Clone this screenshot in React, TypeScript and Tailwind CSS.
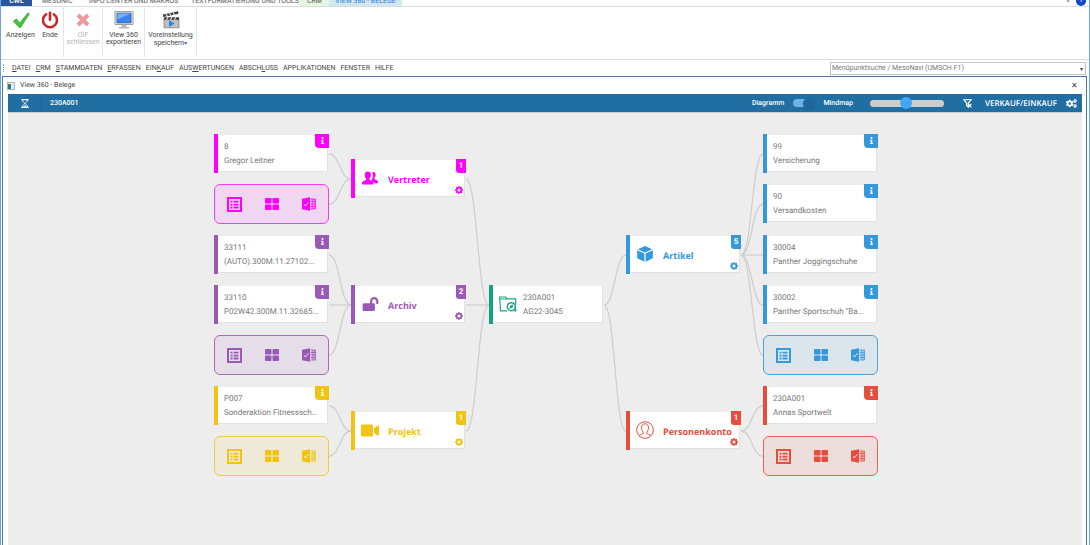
import type { ReactNode } from "react";
import { FaCogs, FaInfo, FaLockOpen, FaVideo } from "react-icons/fa";

interface Theme {
  text: string;
  bar: string;
  panel: string;
}

interface Leaf {
  id?: string;
  label?: string;
  y: number;
}

interface Group {
  name: string;
  count: number;
  theme: Theme;
  side: "left" | "right";
  y: number;
  icon: ReactNode;
  leaves: Leaf[];
}

const NODE_W = 115;
const NODE_MID = 20;
const COLUMNS = { leftLeaf: 0, leftGroup: 137, center: 275, rightGroup: 412, rightLeaf: 549 };
const CENTER_Y = 173;

const magenta: Theme = { text: "text-[#ff00ff]", bar: "bg-[#ff00ff]", panel: "border-[#f63df6] bg-[#f0d6f0]" };
const purple: Theme = { text: "text-[#9b59b6]", bar: "bg-[#9b59b6]", panel: "border-[#a56cbd] bg-[#e5dee8]" };
const yellow: Theme = { text: "text-[#f1c40f]", bar: "bg-[#f1c40f]", panel: "border-[#f1c93a] bg-[#efe9d8]" };
const blue: Theme = { text: "text-[#3498db]", bar: "bg-[#3498db]", panel: "border-[#4ba3de] bg-[#dbe5ec]" };
const red: Theme = { text: "text-[#e74c3c]", bar: "bg-[#e74c3c]", panel: "border-[#e86355] bg-[#eddddb]" };

function PeopleIcon() {
  return (
    <svg className="w-4 h-4" viewBox="0 0 16 16" fill="currentColor">
      <path d="M10.2 2.2c2-.6 3.500.5 3.400 2.600 0 1.300-.5 2.400-1.200 3v1.200c.3.8 3.400 1.200 3.600 2.700v1.500h-4c-.2-1.500-1.800-2-2.700-2.500l.2-1c.9-1 1.500-2.400 1.400-4.100 0-1.400-.3-2.500-.7-3.400z" />
      <path d="M5.800 1.500c2 0 3.200 1.400 3.100 3.500-.1 1.500-.6 2.700-1.400 3.400v1.400c.4.9 3.700 1.300 3.900 3.100v1.600H0v-1.600c.2-1.800 3.700-2.200 4.100-3.100V8.400C3.300 7.700 2.800 6.500 2.700 5c-.1-2.100 1.100-3.500 3.100-3.500z" />
    </svg>
  );
}

function CubeIcon() {
  return (
    <svg className="w-4 h-4" viewBox="0 0 16 16" fill="currentColor">
      <path d="M8 0l7.200 3.200L8 6.600.8 3.200z" />
      <path d="M.2 4.300l7.200 3.300v8.200L.2 12.300z" />
      <path d="M15.800 4.300L8.600 7.600v8.200l7.200-3.500z" />
    </svg>
  );
}

function PersonIcon() {
  return (
    <svg className="w-[18px] h-[18px]" viewBox="0 0 18 18" fill="none" stroke="currentColor" strokeWidth="1">
      <circle cx="9" cy="9" r="8.300" />
      <path d="M3.300 14.700c.4-1.300 3.800-1.300 4-2.500.1-.8-.3-1-.8-1.900C5.900 9.300 5.500 8 5.500 6.600 5.500 4.200 6.900 2.800 9 2.800s3.500 1.400 3.500 3.800c0 1.400-.4 2.700-1 3.700-.5.900-.9 1.100-.8 1.900.2 1.200 3.600 1.200 4 2.500" />
    </svg>
  );
}

function FolderIcon() {
  return (
    <svg className="w-[18px] h-4 text-[#1fa587]" viewBox="0 0 18 16" fill="none" stroke="currentColor" strokeWidth="1.200">
      <path d="M8 14.800H1.500L.7 1h6l1.200 1.800h8.800v6M.8 3h7M16.700 12v2.800h-2" />
      <circle cx="12.300" cy="10.700" r="4" strokeWidth="1.500" />
      <path d="M14.600 8.300l-1.200 3.400-3.400 1.300 1.300-3.400z" fill="currentColor" stroke="none" />
    </svg>
  );
}

function GearIcon() {
  return (
    <svg className="w-2 h-2" viewBox="0 0 8 8" fill="none" stroke="currentColor">
      <circle cx="4" cy="4" r="2.400" strokeWidth="1.800" />
      <path d="M4 0v1M4 7v1M0 4h1M7 4h1M1.200 1.200l.7.7M6.100 6.100l.7.7M6.800 1.200l-.7.7M1.900 6.100l-.7.7" strokeWidth="1.300" />
    </svg>
  );
}

function ListIcon() {
  return (
    <svg className="w-[15px] h-[15px]" viewBox="0 0 15 15" fill="currentColor">
      <path fillRule="evenodd" d="M0 0h15v15H0zM2 2v11h11V2z" />
      <path d="M3.500 3.800h2v1.800h-2zM6.500 3.800h5v1.800h-5zM3.500 6.700h2v1.800h-2zM6.500 6.700h5v1.800h-5zM3.500 9.600h2v1.800h-2zM6.500 9.600h5v1.800h-5z" />
    </svg>
  );
}

function TilesIcon() {
  return (
    <svg className="w-3.5 h-3" viewBox="0 0 14 12" fill="currentColor">
      <rect width="6.500" height="5.500" rx=".8" />
      <rect x="7.500" width="6.500" height="5.500" rx=".8" />
      <rect y="6.500" width="6.500" height="5.500" rx=".8" />
      <rect x="7.500" y="6.500" width="6.500" height="5.500" rx=".8" />
    </svg>
  );
}

function SheetIcon() {
  return (
    <svg className="w-3.5 h-3.5" viewBox="0 0 14 14">
      <path fillRule="evenodd" fill="currentColor" d="M0 1.800L8 .2v13.600L0 12.200zM1.700 7.600l1.800 2 3.200-4-.6-.5-2.600 3.200-1.200-1.300z" />
      <path d="M8.500 2h5v10h-5M8.500 4.500h5M8.500 7h5M8.500 9.500h5M10.200 2v10M12 2v10" fill="none" stroke="currentColor" strokeWidth=".8" />
    </svg>
  );
}

const groups: Group[] = [
  {
    name: "Vertreter", count: 1, theme: magenta, side: "left", y: 47, icon: <PeopleIcon />,
    leaves: [{ id: "8", label: "Gregor Leitner", y: 22 }, { y: 72 }],
  },
  {
    name: "Archiv", count: 2, theme: purple, side: "left", y: 173, icon: <FaLockOpen className="w-[17px] h-[14px]" />,
    leaves: [
      { id: "33111", label: "(AUTO).300M.11.27102...", y: 123 },
      { id: "33110", label: "P02W42.300M.11.32685...", y: 173 },
      { y: 223 },
    ],
  },
  {
    name: "Projekt", count: 1, theme: yellow, side: "left", y: 299, icon: <FaVideo className="w-[18px] h-[17px]" />,
    leaves: [{ id: "P007", label: "Sonderaktion Fitnesssch...", y: 274 }, { y: 324 }],
  },
  {
    name: "Artikel", count: 5, theme: blue, side: "right", y: 123, icon: <CubeIcon />,
    leaves: [
      { id: "99", label: "Versicherung", y: 22 },
      { id: "90", label: "Versandkosten", y: 72 },
      { id: "30004", label: "Panther Joggingschuhe", y: 123 },
      { id: "30002", label: 'Panther Sportschuh "Ba...', y: 173 },
      { y: 223 },
    ],
  },
  {
    name: "Personenkonto", count: 1, theme: red, side: "right", y: 299, icon: <PersonIcon />,
    leaves: [{ id: "230A001", label: "Annas Sportwelt", y: 274 }, { y: 324 }],
  },
];

function Node({ x, y, bar, children }: { x: number; y: number; bar: string; children: ReactNode }) {
  return (
    <div className="absolute flex w-[115px] h-[39px]" style={{ left: x, top: y }}>
      <div className={`w-1 ${bar}`} />
      <div className="flex flex-1 items-center my-px mr-px bg-white border-r border-b border-[#e2e2e2]">{children}</div>
    </div>
  );
}

function LeafNode({ leaf, x, theme }: { leaf: Leaf; x: number; theme: Theme }) {
  if (!leaf.id) {
    return (
      <div
        className={`absolute flex items-center justify-between w-[115px] h-10 px-3 rounded-md border ${theme.panel} ${theme.text}`}
        style={{ left: x, top: leaf.y }}
      >
        <button aria-label="Liste"><ListIcon /></button>
        <button aria-label="Kacheln"><TilesIcon /></button>
        <button aria-label="Tabelle"><SheetIcon /></button>
      </div>
    );
  }
  return (
    <Node x={x} y={leaf.y} bar={theme.bar}>
      <div className="pl-1.5 pt-0.5 text-[8px] leading-[14px] text-[#777] whitespace-nowrap">
        <p>{leaf.id}</p>
        <p>{leaf.label}</p>
      </div>
      <button aria-label="Info" className={`absolute top-0 right-0 flex justify-center pt-[3px] w-3.5 h-3.5 rounded-bl-[4px] text-white ${theme.bar}`}>
        <FaInfo className="w-[7px] h-[7px]" />
      </button>
    </Node>
  );
}

function GroupNode({ group, x }: { group: Group; x: number }) {
  const { theme } = group;
  return (
    <Node x={x} y={group.y} bar={theme.bar}>
      <div className={`flex items-center pl-[6px] ${theme.text}`}>
        <span className="flex justify-center w-[18px]">{group.icon}</span>
        <span className="pl-[9px] pt-1 font-['Open_Sans',sans-serif] text-[9px] leading-3 font-bold">{group.name}</span>
      </div>
      <span className={`absolute top-0 right-0 w-2.5 h-3.5 rounded-bl-[3px] text-center text-[8px] leading-[14px] font-bold text-white ${theme.bar}`}>
        {group.count}
      </span>
      <button aria-label="Einstellungen" className={`absolute bottom-1 right-[3px] ${theme.text}`}>
        <GearIcon />
      </button>
    </Node>
  );
}

function curve(x1: number, y1: number, x2: number, y2: number) {
  const mid = (x1 + x2) / 2;
  return `M${x1} ${y1 + NODE_MID}C${mid} ${y1 + NODE_MID} ${mid} ${y2 + NODE_MID} ${x2} ${y2 + NODE_MID}`;
}

function Connectors() {
  const paths = groups.flatMap((g) => {
    if (g.side === "left") {
      return [
        curve(COLUMNS.leftGroup + NODE_W, g.y, COLUMNS.center, CENTER_Y),
        ...g.leaves.map((l) => curve(NODE_W, l.y, COLUMNS.leftGroup, g.y)),
      ];
    }
    return [
      curve(COLUMNS.center + NODE_W, CENTER_Y, COLUMNS.rightGroup, g.y),
      ...g.leaves.map((l) => curve(COLUMNS.rightGroup + NODE_W, g.y, COLUMNS.rightLeaf, l.y)),
    ];
  });
  return (
    <svg className="absolute top-0 left-0 w-[664px] h-[380px]" fill="none" stroke="#cfcfcf" strokeWidth="1.300">
      {paths.map((d) => (
        <path key={d} d={d} />
      ))}
    </svg>
  );
}

function Mindmap() {
  return (
    <main className="flex-1 bg-[#ededed] border-t border-[#c4ccd2]">
      <div className="relative w-[662px] h-[380px] -mt-px mx-auto">
        <Connectors />
        {groups.map((g) => (
          <div key={g.name}>
            <GroupNode group={g} x={g.side === "left" ? COLUMNS.leftGroup : COLUMNS.rightGroup} />
            {g.leaves.map((l) => (
              <LeafNode key={l.y} leaf={l} theme={g.theme} x={g.side === "left" ? COLUMNS.leftLeaf : COLUMNS.rightLeaf} />
            ))}
          </div>
        ))}
        <Node x={COLUMNS.center} y={CENTER_Y} bar="bg-[#16a085]">
          <div className="flex items-center pl-1.5">
            <FolderIcon />
            <div className="pl-1.5 pt-0.5 text-[8px] leading-[14px] text-[#777]">
              <p>230A001</p>
              <p>AG22-3045</p>
            </div>
          </div>
        </Node>
      </div>
    </main>
  );
}

function TabStrip() {
  return (
    <nav className="flex items-end h-[7px] overflow-hidden border-b border-[#dcdcdc] text-[7px] leading-[9px] text-[#555] whitespace-nowrap">
      <a href="#cwl" className="w-[31px] text-center font-semibold text-white bg-[#2b579a]">CWL</a>
      <a href="#mesonic" className="w-[47px] pl-[10px]">MESONIC</a>
      <a href="#info" className="w-[102px] pl-[10px]">INFO CENTER UND MAKROS</a>
      <a href="#text" className="w-[119px] pl-[10px]">TEXTFORMATIERUNG UND TOOLS</a>
      <a href="#crm" className="w-[29px] text-center bg-[#e6f7df]">CRM</a>
      <a href="#view360" className="w-[73px] text-center text-[#2f78d6] bg-[#d0e8ef]">VIEW 360 - BELEGE</a>
      <span className="ml-auto pr-1.5">×</span>
      <span className="w-2.5 h-2.5 mr-[3px] rounded-full bg-[#1247c8] text-center text-white">i</span>
    </nav>
  );
}

function RibbonButton({ icon, children, disabled }: { icon: ReactNode; children: ReactNode; disabled?: boolean }) {
  return (
    <button disabled={disabled} className="flex flex-col items-center gap-0.5 text-[7px] leading-[7px] text-[#444] whitespace-nowrap disabled:text-[#b5b5b5]">
      {icon}
      <span>{children}</span>
    </button>
  );
}

function Ribbon() {
  return (
    <div className="flex h-[53px] pt-px pb-[2px] pl-px border-b border-[#dcdcdc]">
      <div className="flex items-start justify-center gap-1.5 pt-0.5 w-[62px] border-r border-[#e4e4e4]">
        <RibbonButton
          icon={
            <svg className="w-[18px] h-5" viewBox="0 0 18 20">
              <path d="M1.500 11l3-2 3.200 4.200L16 3l1.300.8L8.500 17.500 6.700 17z" fill="#43c83a" stroke="#2c9a2a" strokeWidth=".8" />
            </svg>
          }
        >
          Anzeigen
        </RibbonButton>
        <RibbonButton
          icon={
            <svg className="w-[18px] h-5" viewBox="0 0 18 20" fill="none" stroke="#cf2128" strokeLinecap="round">
              <path d="M5.200 4.300a7 7 0 1 0 7.600 0" strokeWidth="2.500" />
              <path d="M9 2.800v7" strokeWidth="2.600" />
            </svg>
          }
        >
          Ende
        </RibbonButton>
      </div>
      <div className="flex items-start justify-center pt-0.5 w-[39px] border-r border-[#e4e4e4]">
        <RibbonButton
          disabled
          icon={
            <svg className="w-4 h-5" viewBox="0 0 16 20" stroke="#e9999b" strokeWidth="4">
              <path d="M3 5l10 10M13 5L3 15" />
            </svg>
          }
        >
          OIF<br />schliessen
        </RibbonButton>
      </div>
      <div className="flex items-start justify-center pt-0.5 w-[42px] border-r border-[#e4e4e4]">
        <RibbonButton
          icon={
            <svg className="w-5 h-5" viewBox="0 0 20 20">
              <path d="M1 1.500h18v13H1z" fill="#e8e8e4" stroke="#8b8b8b" strokeWidth=".8" />
              <path d="M3 3.200h14v9.600H3z" fill="#3f83f0" stroke="#2650a8" strokeWidth=".8" />
              <path d="M3.400 3.600h13.200l-13.200 6z" fill="#78adfa" />
              <path d="M7.500 15h5v2H15v1.500H5V17h2.500z" fill="#b9b9b9" />
            </svg>
          }
        >
          View 360<br />exportieren
        </RibbonButton>
      </div>
      <div className="flex items-start justify-center pt-0.5 w-[52px] border-r border-[#e4e4e4]">
        <RibbonButton
          icon={
            <svg className="w-[18px] h-5" viewBox="0 0 18 20">
              <path d="M2 8.500h15v9.300H2z" fill="#bfbfbf" stroke="#777" strokeWidth=".7" />
              <path d="M2 7.200h15v2.500H2zM.8 4.500L16 1.300l.5 2.400L1.300 7z" fill="#3c3c3c" />
              <path d="M4 3.900l1.300 2.200M7.500 3.100l1.300 2.200M11 2.400l1.300 2.200M4.500 9.600L6 7.300M8.500 9.600L10 7.300M12.500 9.600L14 7.300" stroke="#e8e8e8" strokeWidth="1.100" />
              <path d="M7 10.300l5.500 3.300L7 17z" fill="#2585e8" />
            </svg>
          }
        >
          Voreinstellung<br />speichern<span className="text-[#2f78d6] text-[6px]">▾</span>
        </RibbonButton>
      </div>
    </div>
  );
}

// text before, at and after the access key
const menu = [
  ["", "D", "ATEI"],
  ["", "C", "RM"],
  ["", "S", "TAMMDATEN"],
  ["", "E", "RFASSEN"],
  ["EIN", "K", "AUF"],
  ["AUS", "W", "ERTUNGEN"],
  ["ABSCH", "L", "USS"],
  ["APPLIKATIONEN", "", ""],
  ["FENSTER", "", ""],
  ["HILFE", "", ""],
];

function MenuBar() {
  return (
    <div className="flex items-center h-4 pr-[3px] text-[7px] text-[#444]">
      <span className="h-2 ml-0.5 border-l border-dotted border-[#999]" />
      <nav className="flex gap-[5px] pl-2 whitespace-nowrap">
        {menu.map(([before, key, after]) => (
          <a key={before + key + after} href="#menu">
            {before}
            <span className="underline">{key}</span>
            {after}
          </a>
        ))}
      </nav>
      <div className="flex items-center w-64 h-[13px] ml-auto border border-[#c3c3c3]">
        <input aria-label="Menüpunktsuche" placeholder="Menüpunktsuche / MesoNavi (UMSCH F1)" className="flex-1 px-px outline-none placeholder:text-[#777]" />
        <button aria-label="Öffnen" className="pr-0.5 text-[6px]">▾</button>
      </div>
    </div>
  );
}

function Toolbar() {
  return (
    <header className="flex items-center h-[18px] bg-[#206ea2] text-[8px] text-white">
      <button aria-label="Verlauf" className="flex items-center justify-center w-[34px] h-full border-r border-[#1b6191]">
        <svg className="w-2 h-[9px]" viewBox="0 0 8 9" fill="none" stroke="currentColor">
          <path d="M.3.6h7.400M.3 8.400h7.400" strokeWidth="1.200" />
          <path d="M1.500 1c0 2 2 2.500 2 3.500S1.500 6 1.500 8M6.500 1c0 2-2 2.500-2 3.500s2 1.500 2 3.500" strokeWidth=".9" />
          <path d="M2.500 7.800L4 6l1.500 1.800z" fill="currentColor" stroke="none" />
        </svg>
      </button>
      <span className="pl-2 text-[7px] font-medium">230A001</span>
      <label className="flex items-center ml-auto text-[7px] font-medium">
        Diagramm
        <input
          type="checkbox"
          role="switch"
          defaultChecked
          className="flex items-center justify-end w-[21px] h-2 mx-[9px] appearance-none rounded-full bg-linear-to-r from-[#6fb3e3] from-60% to-transparent to-60% before:w-[11px] before:h-[11px] before:rounded-full before:bg-[#1f66a0] before:shadow"
        />
        Mindmap
      </label>
      <input
        type="range"
        aria-label="Zoom"
        defaultValue={49}
        className="w-[74px] h-[7px] ml-[17px] appearance-none rounded-full bg-[#cccccc] [&::-webkit-slider-thumb]:appearance-none [&::-webkit-slider-thumb]:w-3 [&::-webkit-slider-thumb]:h-3 [&::-webkit-slider-thumb]:rounded-full [&::-webkit-slider-thumb]:bg-[#42a5f5]"
      />
      <button aria-label="Filter löschen" className="ml-[19px]">
        <svg className="w-[9px] h-[9px]" viewBox="0 0 9 9" fill="none" stroke="currentColor">
          <path d="M.6.7h7.800L5.300 4v4L3.700 6.800V4z" strokeWidth="1.100" />
          <path d="M5 4.800l3.300 3.500M8.300 4.800L5 8.300" strokeWidth="1.200" />
        </svg>
      </button>
      <span className="ml-[13px] pt-0.5 font-['Open_Sans',sans-serif] font-semibold">VERKAUF/EINKAUF</span>
      <button aria-label="Einstellungen" className="ml-[9px] mr-[5px]">
        <FaCogs className="w-[11px] h-[11px]" />
      </button>
    </header>
  );
}

export default function App() {
  return (
    <div className="flex flex-col min-h-screen bg-white border-l border-r border-[#6ba3e8] font-['Roboto','Open_Sans',sans-serif] [text-rendering:geometricPrecision]">
      <TabStrip />
      <Ribbon />
      <MenuBar />
      <section className="flex flex-col flex-1 ml-px mr-0.5 px-1 border-t border-l border-r border-[#4a76ab]">
        <div className="flex items-center h-[17px] text-[7px] text-[#444]">
          <svg className="w-2 h-2" viewBox="0 0 8 8">
            <path d="M.4.4h7.200v7.200H.4z" fill="#e9eef2" stroke="#8a98a5" strokeWidth=".8" />
            <path d="M1 2h3v5H1z" fill="#2f7a74" />
          </svg>
          <h1 className="pl-[5px]">View 360 - Belege</h1>
          <button aria-label="Schließen" className="ml-auto mr-1 text-[8px]">✕</button>
        </div>
        <div className="flex flex-col flex-1 ml-px">
          <Toolbar />
          <Mindmap />
        </div>
      </section>
    </div>
  );
}
